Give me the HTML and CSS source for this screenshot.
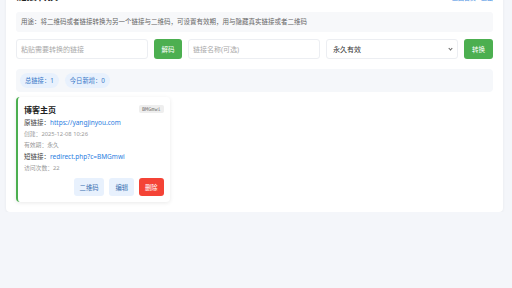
FILE: index.html
```html
<!DOCTYPE html>
<html lang="zh-CN">
  <head>
    <meta charset="UTF-8" />
    <title>链接转换</title>
    <link rel="stylesheet" href="styles.css">
  </head>
  <body>
    <div class="container">
      <header class="top">
        <h1>链接转换</h1>
        <nav class="top-links">
          <a href="#">返回首页</a>
          <a href="#">退出</a>
        </nav>
      </header>

      <div class="usage">
        用途：将二维码或者链接转换为另一个链接与二维码，可设置有效期，用与隐藏真实链接或者二维码
      </div>

      <div class="convert-bar">
        <input type="text" placeholder="粘贴需要转换的链接" />
        <button class="btn-green">解码</button>
        <input type="text" placeholder="链接名称(可选)" />
        <div class="select-wrap">
          <select>
            <option>永久有效</option>
            <option>1天</option>
            <option>7天</option>
            <option>30天</option>
          </select>
        </div>
        <button class="btn-green">转换</button>
      </div>

      <div class="stats">
        <span class="pill">总链接：1</span>
        <span class="pill">今日新增：0</span>
      </div>

      <div class="cards">
        <div class="card">
          <div class="card-head">
            <h3>博客主页</h3>
            <span class="code">BMGmwi</span>
          </div>
          <p class="row">原链接：<a href="#">https://yangjinyou.com</a></p>
          <p class="meta">创建：2025-12-08 10:26</p>
          <p class="meta">有效期：永久</p>
          <p class="row">短链接：<a href="#">redirect.php?c=BMGmwi</a></p>
          <p class="meta">访问次数：22</p>
          <div class="actions">
            <button class="btn-light">二维码</button>
            <button class="btn-light">编辑</button>
            <button class="btn-red">删除</button>
          </div>
        </div>
      </div>
    </div>
  </body>
</html>
```

FILE: styles.css
```css
body {
  font-family: "Noto Sans", "Noto Sans CJK SC", sans-serif;
  background-color: #f4f6fa;
  margin: 0;
  padding: 0 9px 0 6px;
  color: #333;
}

.container {
  background-color: white;
  border-radius: 4px;
  box-shadow: 0 1px 3px rgba(0, 0, 0, 0.06);
  padding: 8px 10px 10px 10px;
  margin-top: -19px;
}

.top {
  display: flex;
  justify-content: space-between;
  align-items: center;
  height: 14px;
  margin-bottom: 9px;
}

h1 {
  margin: 0;
  font-size: 10.5px;
  line-height: 14px;
  color: #222;
}

.top-links {
  display: flex;
  gap: 5px;
  padding-top: 2px;
}

.top-links a {
  color: #4a90e2;
  font-size: 6px;
  text-decoration: none;
}

.usage {
  background-color: #f7f8fa;
  border-radius: 3px;
  padding: 0 5px;
  height: 20px;
  line-height: 20px;
  font-size: 6.5px;
  color: #666;
  margin-bottom: 7px;
}

.convert-bar {
  display: grid;
  grid-template-columns: 1fr 28px 1fr 1fr 29px;
  gap: 6px;
  height: 20px;
  margin-bottom: 10px;
}

.convert-bar input,
.convert-bar select {
  border: 1px solid #eceef2;
  border-radius: 3px;
  padding: 0 4px;
  font-family: inherit;
  font-size: 7px;
  color: #333;
  background-color: white;
  outline: none;
  min-width: 0;
}

.convert-bar input::placeholder {
  color: #aaa;
}

.select-wrap {
  position: relative;
  display: flex;
}

.select-wrap select {
  appearance: none;
  width: 100%;
  padding-left: 6px;
}

/* small chevron like the native one */
.select-wrap::after {
  content: "";
  position: absolute;
  right: 6px;
  top: 8px;
  width: 2px;
  height: 2px;
  border-right: 1px solid #666;
  border-bottom: 1px solid #666;
  transform: rotate(45deg);
  pointer-events: none;
}

.btn-green {
  background-color: #4caf50;
  color: white;
  border: none;
  border-radius: 3px;
  font-family: inherit;
  font-size: 6.5px;
  padding: 0;
  cursor: pointer;
}

.stats {
  background-color: #f5f7fa;
  border-radius: 4px;
  padding: 4px;
  display: flex;
  gap: 6px;
  margin-bottom: 5px;
}

.pill {
  background-color: #e8f1fd;
  color: #3a78c8;
  font-size: 6.3px;
  line-height: 15px;
  padding: 0 5px;
  border-radius: 8px;
}

.cards {
  display: grid;
  grid-template-columns: repeat(3, 1fr);
  gap: 8px;
}

.card {
  border-left: 2px solid #4caf50;
  border-radius: 4px;
  box-shadow: 0 1px 4px rgba(0, 0, 0, 0.09);
  padding: 7px 6px 6px 6px;
}

.card-head {
  display: flex;
  justify-content: space-between;
  align-items: center;
  height: 10px;
  margin-bottom: 4px;
}

.card h3 {
  margin: 0;
  font-size: 8px;
  color: #222;
}

.code {
  background-color: #eeeeee;
  color: #777;
  font-family: "DejaVu Sans Mono", monospace;
  font-size: 5.2px;
  line-height: 8px;
  padding: 0 3px;
  border-radius: 2px;
}

.card p {
  margin: 2px 0;
}

.row {
  font-size: 6.5px;
  line-height: 10px;
  color: #444;
}

.row a {
  color: #2a7de1;
  text-decoration: none;
}

.meta {
  font-size: 5.8px;
  line-height: 9px;
  color: #999;
}

.actions {
  display: flex;
  justify-content: flex-end;
  gap: 5px;
  margin-top: 5px;
}

.actions button {
  height: 18px;
  border: none;
  border-radius: 3px;
  font-family: inherit;
  font-size: 6.3px;
  padding: 0 6px;
  cursor: pointer;
}

.btn-light {
  background-color: #e8f1fd;
  color: #3a6fb0;
}

.btn-red {
  background-color: #f44336;
  color: white;
}
```
